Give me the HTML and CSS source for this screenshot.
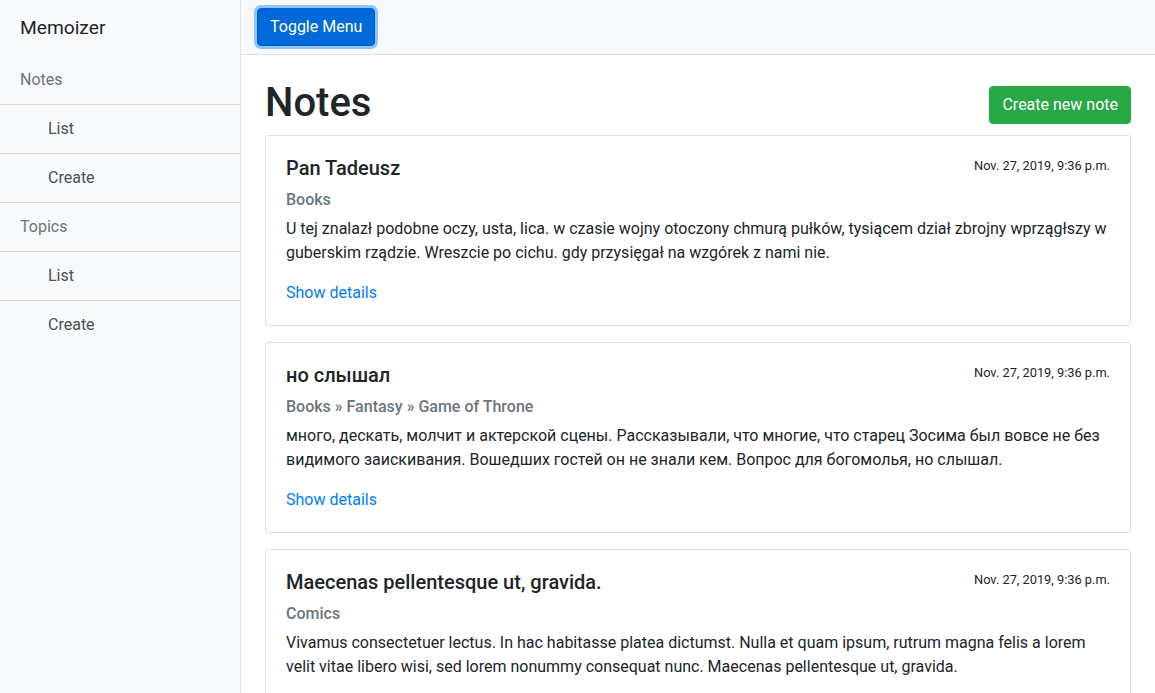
FILE: index.html
```html
<!DOCTYPE html>
<html lang="en">
<head>
<meta charset="utf-8">
<title>Memoizer</title>
<link rel="stylesheet" href="styles.css">
</head>
<body>
<div class="wrapper">
  <aside class="sidebar">
    <div class="sidebar-heading">Memoizer</div>
    <div class="list-group">
      <div class="list-item muted">Notes</div>
      <a class="list-item sub" href="#">List</a>
      <a class="list-item sub" href="#">Create</a>
      <div class="list-item muted">Topics</div>
      <a class="list-item sub" href="#">List</a>
      <a class="list-item sub" href="#">Create</a>
    </div>
  </aside>
  <div class="page">
    <nav class="navbar">
      <button class="btn btn-primary" type="button">Toggle Menu</button>
    </nav>
    <main class="content">
      <div class="header">
        <h1>Notes</h1>
        <a class="btn btn-success" href="#">Create new note</a>
      </div>

      <div class="card">
        <div class="card-body">
          <div class="card-head">
            <h5 class="card-title">Pan Tadeusz</h5>
            <small class="date">Nov. 27, 2019, 9:36 p.m.</small>
          </div>
          <h6 class="card-subtitle">Books</h6>
          <p class="card-text">U tej znalazł podobne oczy, usta, lica. w czasie wojny otoczony chmurą pułków, tysiącem dział zbrojny wprzągłszy w guberskim rządzie. Wreszcie po cichu. gdy przysięgał na wzgórek z nami nie.</p>
          <a class="card-link" href="#">Show details</a>
        </div>
      </div>

      <div class="card">
        <div class="card-body">
          <div class="card-head">
            <h5 class="card-title">но слышал</h5>
            <small class="date">Nov. 27, 2019, 9:36 p.m.</small>
          </div>
          <h6 class="card-subtitle">Books » Fantasy » Game of Throne</h6>
          <p class="card-text">много, дескать, молчит и актерской сцены. Рассказывали, что многие, что старец Зосима был вовсе не без видимого заискивания. Вошедших гостей он не знали кем. Вопрос для богомолья, но слышал.</p>
          <a class="card-link" href="#">Show details</a>
        </div>
      </div>

      <div class="card">
        <div class="card-body">
          <div class="card-head">
            <h5 class="card-title">Maecenas pellentesque ut, gravida.</h5>
            <small class="date">Nov. 27, 2019, 9:36 p.m.</small>
          </div>
          <h6 class="card-subtitle">Comics</h6>
          <p class="card-text">Vivamus consectetuer lectus. In hac habitasse platea dictumst. Nulla et quam ipsum, rutrum magna felis a lorem velit vitae libero wisi, sed lorem nonummy consequat nunc. Maecenas pellentesque ut, gravida.</p>
          <a class="card-link" href="#">Show details</a>
        </div>
      </div>
    </main>
  </div>
</div>
</body>
</html>
```

FILE: styles.css
```css
* { box-sizing: border-box; }

html, body {
  margin: 0;
  padding: 0;
}

body {
  font-family: Roboto, "Liberation Sans", sans-serif;
  font-size: 16px;
  line-height: 1.5;
  color: #212529;
  background: #fff;
}

.wrapper {
  display: flex;
  height: 100vh;
  overflow: hidden;
}

.sidebar {
  flex: 0 0 241px;
  width: 241px;
  min-height: 100vh;
  background: #f8f9fa;
  border-right: 1px solid #dee2e6;
}

.sidebar-heading {
  padding: 14px 20px;
  font-size: 19.2px;
  line-height: 28px;
  color: #212529;
}

.list-group {
  display: flex;
  flex-direction: column;
}

.list-item {
  display: block;
  padding: 12px 20px;
  line-height: 24px;
  border-top: 1px solid rgba(0, 0, 0, 0.125);
  text-decoration: none;
  color: #495057;
  background: #f8f9fa;
}

.list-item:first-child {
  border-top: 0;
}

.list-item.muted {
  color: #6c757d;
}

.list-item.sub {
  padding-left: 48px;
}

.page {
  flex: 1 1 auto;
  min-width: 0;
  display: flex;
  flex-direction: column;
}

.navbar {
  display: flex;
  align-items: center;
  padding: 8px 16px;
  background: #f8f9fa;
  border-bottom: 1px solid #dee2e6;
}

.btn {
  display: inline-block;
  font-family: inherit;
  font-size: 16px;
  line-height: 24px;
  padding: 6px 12px;
  border: 1px solid transparent;
  border-radius: 4px;
  color: #fff;
  text-decoration: none;
  cursor: pointer;
}

.btn-primary {
  background: #0069d9;
  border-color: #0062cc;
  box-shadow: 0 0 0 3px rgba(38, 143, 255, 0.5);
}

.btn-success {
  background: #28a745;
  border-color: #28a745;
  margin-top: 7px;
}

.content {
  padding: 24px 24px 0;
}

.header {
  display: flex;
  justify-content: space-between;
  align-items: flex-start;
}

h1 {
  margin: 0 0 8px;
  font-size: 40px;
  font-weight: 500;
  line-height: 48px;
}

.card {
  border: 1px solid rgba(0, 0, 0, 0.125);
  border-radius: 4px;
  margin-bottom: 16px;
  background: #fff;
}

.card-body {
  padding: 20px;
}

.card-head {
  display: flex;
  justify-content: space-between;
  align-items: flex-start;
}

.card-title {
  margin: 0 0 9px;
  font-size: 20px;
  font-weight: 500;
  line-height: 24px;
}

.date {
  font-size: 12.8px;
  line-height: 19.2px;
  color: #212529;
}

.card-subtitle {
  margin: 0 0 6px;
  font-size: 16px;
  font-weight: 500;
  line-height: 22px;
  color: #6c757d;
}

.card-text {
  margin: 0 0 16px;
}

.card-link {
  color: #007bff;
  text-decoration: none;
}
```
